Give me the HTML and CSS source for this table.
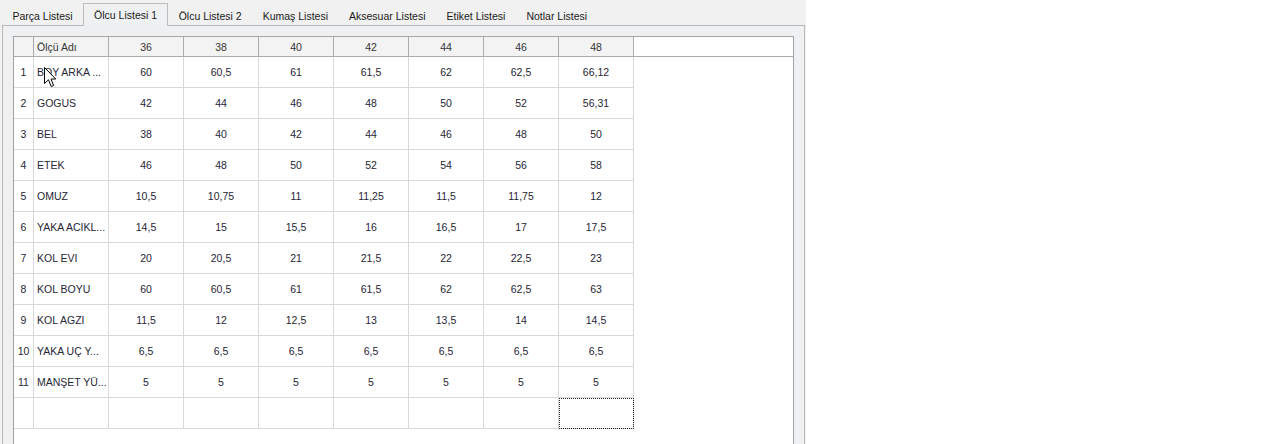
FILE: index.html
```html
<!DOCTYPE html>
<html lang="tr">
<head>
<meta charset="utf-8">
<title>Ölçü Listesi</title>
<link rel="stylesheet" href="styles.css">
</head>
<body>
<div class="app">
  <div class="tabs">
    <div class="tab">Parça Listesi</div>
    <div class="tab active">Ölcu Listesi 1</div>
    <div class="tab">Ölcu Listesi 2</div>
    <div class="tab">Kumaş Listesi</div>
    <div class="tab">Aksesuar Listesi</div>
    <div class="tab">Etiket Listesi</div>
    <div class="tab">Notlar Listesi</div>
  </div>
  <div class="panel">
    <div class="grid">
      <div class="h"></div><div class="h name">Ölçü Adı</div><div class="h">36</div><div class="h">38</div><div class="h">40</div><div class="h">42</div><div class="h">44</div><div class="h">46</div><div class="h">48</div><div class="h fill"></div>

      <div class="c">1</div><div class="c name">BOY ARKA ...</div><div class="c">60</div><div class="c">60,5</div><div class="c">61</div><div class="c">61,5</div><div class="c">62</div><div class="c">62,5</div><div class="c">66,12</div><div class="fill"></div>
      <div class="c">2</div><div class="c name">GOGUS</div><div class="c">42</div><div class="c">44</div><div class="c">46</div><div class="c">48</div><div class="c">50</div><div class="c">52</div><div class="c">56,31</div><div class="fill"></div>
      <div class="c">3</div><div class="c name">BEL</div><div class="c">38</div><div class="c">40</div><div class="c">42</div><div class="c">44</div><div class="c">46</div><div class="c">48</div><div class="c">50</div><div class="fill"></div>
      <div class="c">4</div><div class="c name">ETEK</div><div class="c">46</div><div class="c">48</div><div class="c">50</div><div class="c">52</div><div class="c">54</div><div class="c">56</div><div class="c">58</div><div class="fill"></div>
      <div class="c">5</div><div class="c name">OMUZ</div><div class="c">10,5</div><div class="c">10,75</div><div class="c">11</div><div class="c">11,25</div><div class="c">11,5</div><div class="c">11,75</div><div class="c">12</div><div class="fill"></div>
      <div class="c">6</div><div class="c name">YAKA ACIKL...</div><div class="c">14,5</div><div class="c">15</div><div class="c">15,5</div><div class="c">16</div><div class="c">16,5</div><div class="c">17</div><div class="c">17,5</div><div class="fill"></div>
      <div class="c">7</div><div class="c name">KOL EVI</div><div class="c">20</div><div class="c">20,5</div><div class="c">21</div><div class="c">21,5</div><div class="c">22</div><div class="c">22,5</div><div class="c">23</div><div class="fill"></div>
      <div class="c">8</div><div class="c name">KOL BOYU</div><div class="c">60</div><div class="c">60,5</div><div class="c">61</div><div class="c">61,5</div><div class="c">62</div><div class="c">62,5</div><div class="c">63</div><div class="fill"></div>
      <div class="c">9</div><div class="c name">KOL AGZI</div><div class="c">11,5</div><div class="c">12</div><div class="c">12,5</div><div class="c">13</div><div class="c">13,5</div><div class="c">14</div><div class="c">14,5</div><div class="fill"></div>
      <div class="c">10</div><div class="c name">YAKA UÇ Y...</div><div class="c">6,5</div><div class="c">6,5</div><div class="c">6,5</div><div class="c">6,5</div><div class="c">6,5</div><div class="c">6,5</div><div class="c">6,5</div><div class="fill"></div>
      <div class="c">11</div><div class="c name">MANŞET YÜ...</div><div class="c">5</div><div class="c">5</div><div class="c">5</div><div class="c">5</div><div class="c">5</div><div class="c">5</div><div class="c">5</div><div class="fill"></div>
      <div class="c"></div><div class="c name"></div><div class="c"></div><div class="c"></div><div class="c"></div><div class="c"></div><div class="c"></div><div class="c"></div><div class="c focus"></div><div class="fill"></div>
    </div>
  </div>
</div>
<svg class="cursor" width="13" height="21" viewBox="0 0 13 21" aria-hidden="true">
  <path d="M0.5 0.5 L0.5 16.5 L4.5 12.8 L7.2 19.5 L9.6 18.5 L7 12 L11.8 12 Z" fill="#fff" stroke="#000" stroke-width="1" stroke-linejoin="miter"/>
</svg>
</body>
</html>
```

FILE: styles.css
```css
html, body {
  margin: 0;
  padding: 0;
  background: #ffffff;
  overflow: hidden;
}

body {
  font-family: "Liberation Sans", Arial, sans-serif;
  font-size: 10.5px;
  color: #222;
  position: relative;
  width: 1270px;
  height: 444px;
}

.app {
  width: 806px;
  height: 480px;
  background: #f1f1f1;
  display: flex;
  flex-direction: column;
}

.tabs {
  height: 25px;
  display: flex;
  align-items: flex-end;
  padding-left: 2px;
  box-sizing: border-box;
}

.tab {
  height: 21px;
  line-height: 24px;
  padding: 0 10.5px;
  color: #1a1a1a;
  white-space: nowrap;
}

.tab.active {
  height: 22px;
  line-height: 22px;
  padding: 0 10px;
  margin-bottom: -1px;
  border: 1px solid #bdbdbd;
  border-bottom: none;
  background: #eff0f1;
  position: relative;
  z-index: 1;
}

.panel {
  flex: 1;
  margin-left: 2px;
  width: 803px;
  box-sizing: border-box;
  border: 1px solid #b9b9b9;
  background: #eff0f1;
  padding: 10px 10px 0 10px;
  display: flex;
}

.grid {
  flex: 1;
  background: #ffffff;
  border: 1px solid #a3a3a3;
  display: grid;
  grid-template-columns: 20px 75px repeat(7, 75px) 1fr;
  grid-template-rows: 20px repeat(12, 31px);
  align-content: start;
  color: #262636;
}

.h {
  background: #f3f3f3;
  border-right: 1px solid #ababab;
  border-bottom: 1px solid #ababab;
  display: flex;
  align-items: center;
  justify-content: center;
  color: #333;
  white-space: nowrap;
}

.h.fill {
  border-right: none;
}

.c {
  border-right: 1px solid #d8d8d8;
  border-bottom: 1px solid #d8d8d8;
  display: flex;
  align-items: center;
  justify-content: center;
  white-space: nowrap;
  overflow: hidden;
}

.name {
  justify-content: flex-start;
  padding-left: 3px;
}

.focus {
  outline: 1px dotted #222;
  outline-offset: -1px;
}

.fill {
  background: #ffffff;
}

.cursor {
  position: absolute;
  left: 44px;
  top: 67px;
}
```
